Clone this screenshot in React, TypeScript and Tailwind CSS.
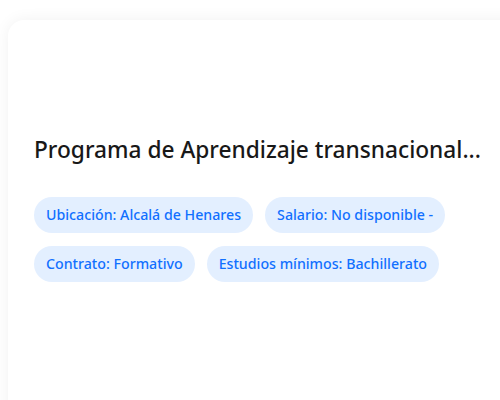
const chips = [
  ["Ubicación: Alcalá de Henares", "Salario: No disponible -"],
  ["Contrato: Formativo", "Estudios mínimos: Bachillerato"],
];

export default function App() {
  return (
    <div className="h-[400px] w-[500px] overflow-hidden bg-white pl-2 pt-5 font-['Noto_Sans',sans-serif]">
      <div className="h-[420px] w-[520px] rounded-2xl bg-white px-[26px] pt-[114px] shadow-[0_0_16px_rgba(0,0,0,0.06)]">
        <h1 className="whitespace-nowrap text-[22.7px] font-medium leading-8 text-[#181818]">
          Programa de Aprendizaje transnacional...
        </h1>
        <div className="mt-[31px] flex flex-col gap-[13px]">
          {chips.map((row, i) => (
            <div key={i} className="flex gap-3">
              {row.map((c) => (
                <span
                  key={c}
                  className="flex h-9 items-center rounded-full bg-[#e3efff] px-3 text-[14.2px] font-medium text-[#1170ff]"
                >
                  {c}
                </span>
              ))}
            </div>
          ))}
        </div>
      </div>
    </div>
  );
}
